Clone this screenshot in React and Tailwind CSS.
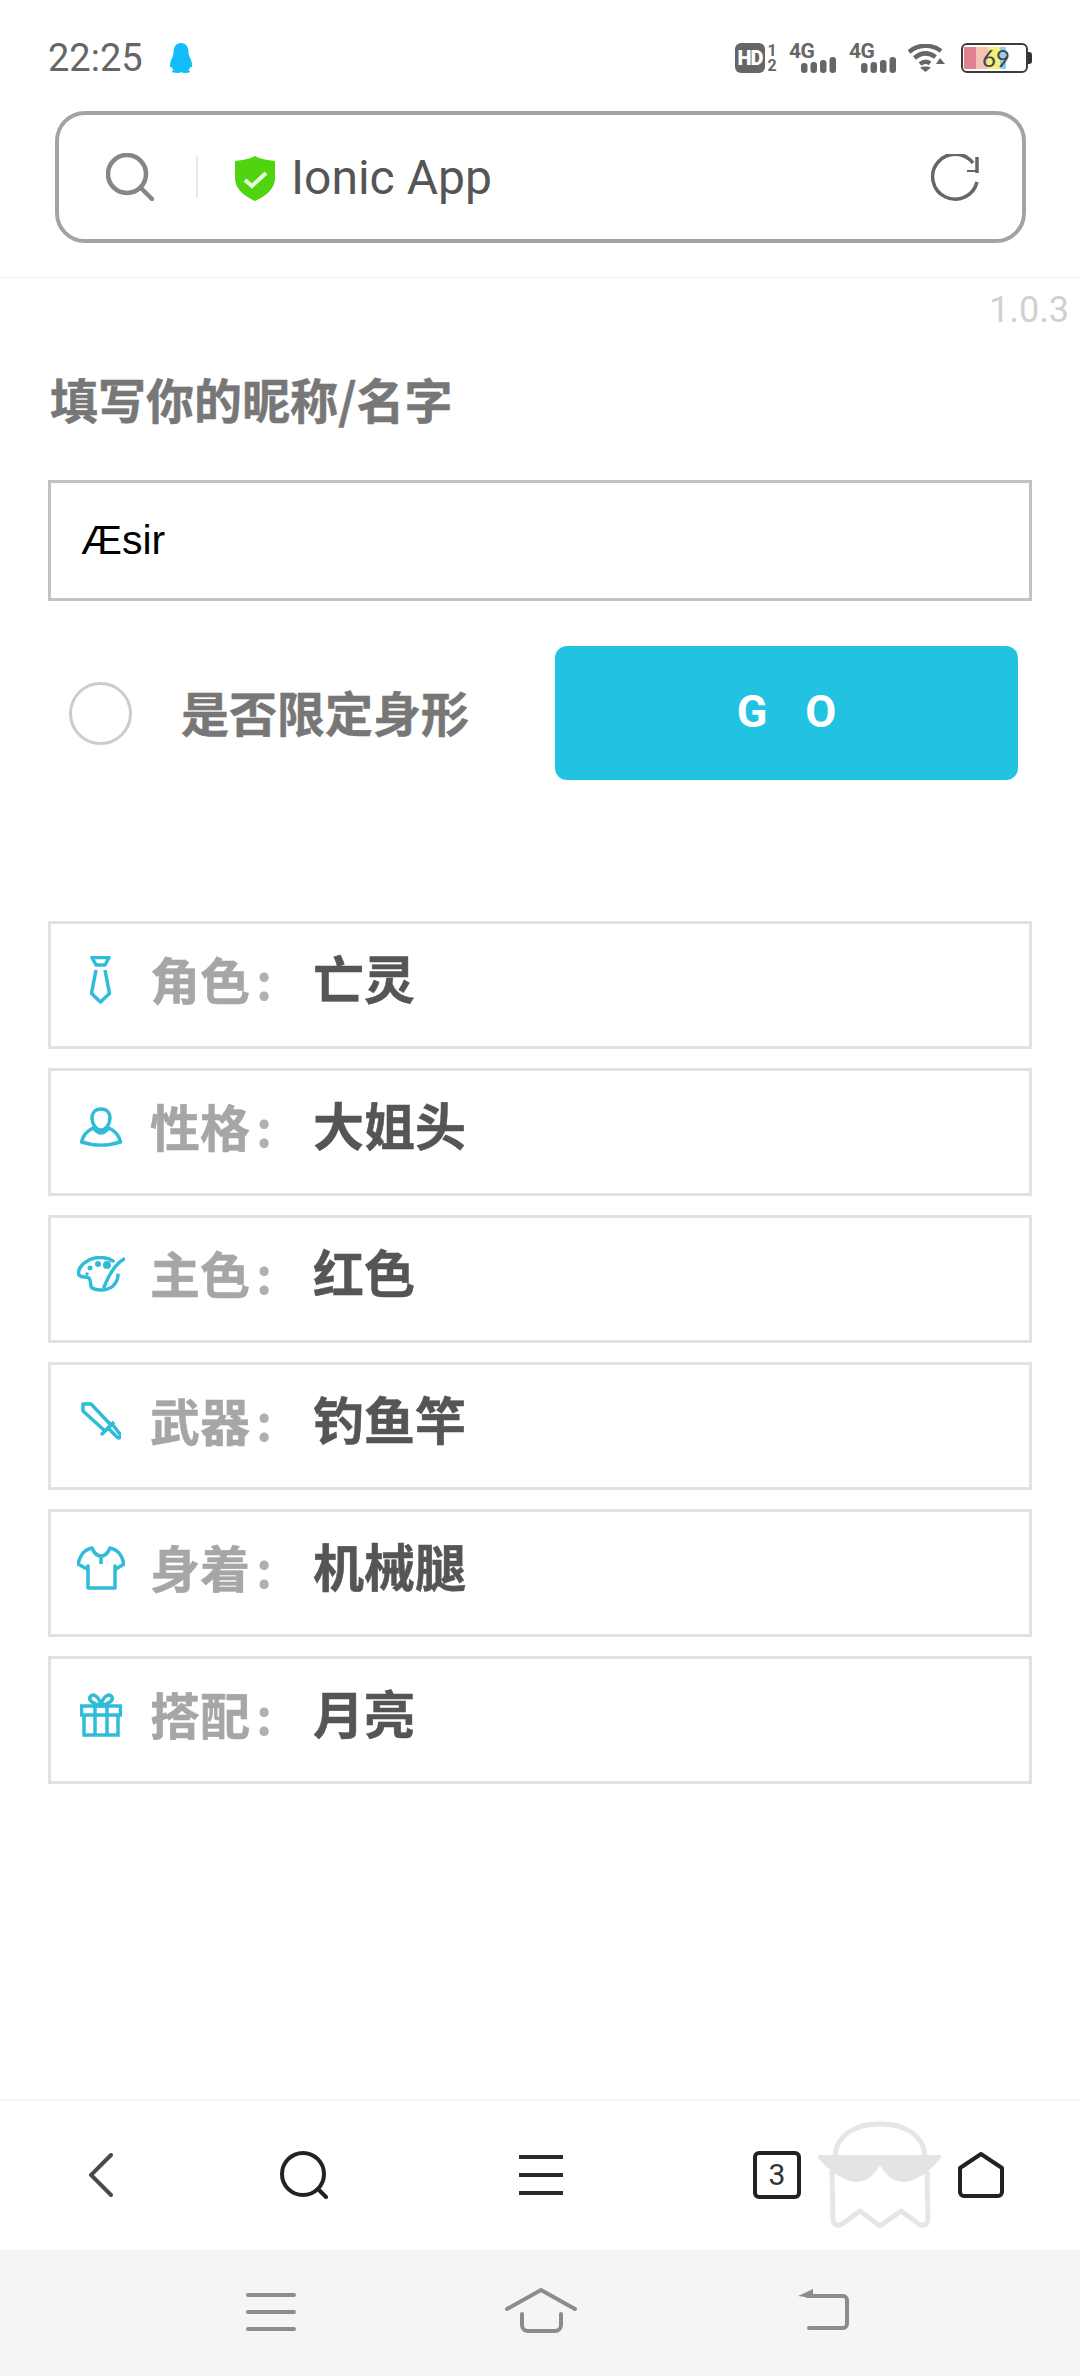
import React from "react";

const C = "#2fbcd8";

function Penguin() {
  return (
    <svg width="24" height="30" viewBox="0 0 24 30" className="ml-[26px]">
      <path fill="#12bdf8" d="M12 0c5 0 7.500 4 7.500 9 0 2 .3 3 1.200 5 1.500 3 2.500 6 2.500 9 0 1.500-1 1.800-2.200.7 0 1.500-.6 2.800-1.600 3.500 1.300.6 2 1.200 1.600 1.900-.4.7-3 .9-5 .9-1.600 0-3-.4-4-.8-1 .4-2.400.8-4 .8-2 0-4.600-.2-5-.9-.4-.7.3-1.300 1.600-1.900-1-.7-1.600-2-1.600-3.500C2 25 1 24.500 1 23c0-3 1-6 2.500-9 .9-2 1-3 1-5C4.500 4 7 0 12 0z" />
    </svg>
  );
}

function HD() {
  return (
    <div className="flex items-center">
      <div className="w-[30px] h-[30px] rounded-[6px] bg-[#666] text-white text-[20px] font-black leading-none flex items-center justify-center font-['Roboto',sans-serif] tracking-[-1px]">HD</div>
      <div className="ml-[1px] w-[12px] flex flex-col items-center text-[#666] text-[16px] font-bold leading-[15px] font-['Roboto',sans-serif]">
        <span>1</span>
        <span>2</span>
      </div>
    </div>
  );
}

function Signal({ className }) {
  return (
    <div className={"relative w-[47px] h-[30px] " + className}>
      <span className="absolute left-0 top-0 text-[21px] leading-[17px] font-bold text-[#666] tracking-[-0.5px] font-['Roboto',sans-serif]">4G</span>
      <svg width="47" height="30" viewBox="0 0 47 30" className="absolute left-0 top-0">
        <g fill="#666">
          <rect x="12" y="20" width="6.500" height="10" rx="3" />
          <rect x="21.500" y="19" width="6.500" height="11" rx="3" />
          <rect x="31" y="17" width="6.500" height="13" rx="3" />
          <rect x="40.500" y="14" width="6.500" height="16" rx="3" />
        </g>
      </svg>
    </div>
  );
}

function Wifi() {
  return (
    <svg width="37" height="28" viewBox="0 0 37 28" className="ml-[12px]" fill="none" stroke="#666" strokeWidth="4.500">
      <path d="M1 8C10 0 24 0 33 7" />
      <path d="M6.500 14c7-6 14-6 21-1" />
      <path d="M12 20c4-3 7-3 10-.5" />
      <path d="M17.500 28l-5.500-4.500c3-1.500 8-1.500 11 0z" fill="#666" stroke="none" />
      <path d="M32 14l5 6h-9z" fill="#666" stroke="none" />
    </svg>
  );
}

function Battery() {
  return (
    <div className="ml-[16px] flex items-center">
      <div className="relative w-[67px] h-[30px] rounded-[6px] border-[2.5px] border-[#3c3c3c] flex items-center overflow-hidden pl-[1px]">
        <div className="h-[22px] w-[12px] bg-[#e28291]" />
        <div className="h-[22px] w-[12px] bg-[#f3c3b8]" />
        <div className="h-[22px] w-[12px] bg-[#f3ee7e]" />
        <div className="h-[22px] w-[6px] bg-[#8fd0ee]" />
        <span className="absolute left-[19px] top-[2px] text-[24px] leading-[21px] text-[#444] font-['Lato',sans-serif]">69</span>
      </div>
      <div className="w-[4px] h-[12px] rounded-r-[3px] bg-[#333]" />
    </div>
  );
}

function SearchIcon() {
  return (
    <svg width="48" height="48" viewBox="0 0 48 48" fill="none" stroke="#868686" strokeWidth="4.500" strokeLinecap="round">
      <circle cx="21" cy="21" r="19" />
      <path d="M35 35l11 11" />
    </svg>
  );
}

function Shield() {
  return (
    <svg width="40" height="45" viewBox="0 0 40 45" className="ml-[37px] mt-[2px]">
      <path fill="#4fd40f" d="M20 0c5 3 12 4 20 5v17c0 11-9 18-20 23C9 40 0 33 0 22V5c8-1 15-2 20-5z" />
      <path fill="none" stroke="#eafbe0" strokeWidth="4" d="M10 24l7 6 14-13" />
    </svg>
  );
}

function Refresh() {
  return (
    <svg width="48" height="48" viewBox="0 0 48 48" fill="none" stroke="#666" strokeWidth="3.500" className="mt-[2px]">
      <path d="M46 28A22.500 22.500 0 1 1 42 9" />
      <path d="M46 3v16" strokeWidth="3.500" />
      <path d="M36 17h10" strokeWidth="2" />
    </svg>
  );
}

const IconTie = () => (
  <svg width="21" height="48" viewBox="0 0 21 48" fill="none" stroke={C} strokeWidth="3.500" strokeLinejoin="round">
    <path d="M2 1.500h17L15 9H6z" />
    <path d="M6 14L1.500 37.500 10.500 46 19.500 37.500 15 14" />
  </svg>
);
const IconPerson = () => (
  <svg width="42" height="40" viewBox="0 0 42 40" fill="none" stroke={C} strokeWidth="3.500" strokeLinejoin="round">
    <path d="M21 2c6 0 9 4 9 9 0 6-4 12-9 12s-9-6-9-12c0-5 3-9 9-9z" />
    <path d="M13 21C7 24 3 28 1.500 35c12 4 27 4 39 0-1.500-7-5.500-11-11.500-14-2 2-5 5-8 5s-6-3-8-5z" />
  </svg>
);
const IconPalette = () => (
  <svg width="48" height="36" viewBox="0 0 48 36" fill="none" stroke={C} strokeWidth="3.500" strokeLinecap="round">
    <path d="M36 5C30 1 20 0 12 4 4 8 0 15 2 19c2 3 7 1 10 3 3 3 0 7 3 10 5 3 15 3 21-2 3-3 5-7 5-11" />
    <path d="M47 3C40 7 33 16 27 31" />
    <g fill={C} stroke="none">
      <circle cx="30" cy="9" r="4" />
      <circle cx="21" cy="8" r="3" />
      <circle cx="13" cy="12" r="2.500" />
      <circle cx="10" cy="18" r="1.800" />
    </g>
  </svg>
);
const IconSword = () => (
  <svg width="40" height="40" viewBox="0 0 40 40" fill="none" stroke={C} strokeWidth="3.500" strokeLinejoin="round">
    <path d="M2 3h8l20 21-6 6L2 10z" />
    <path d="M33 21L20 34" />
    <path d="M27 27l9 9c3 3 5-2 2-4l-6-8" />
  </svg>
);
const IconTee = () => (
  <svg width="48" height="44" viewBox="0 0 48 44" fill="none" stroke={C} strokeWidth="3.500" strokeLinejoin="round">
    <path d="M15 2C6 4 3 10 1 18l9 5 1-3v22h27V20l1 3 8-5c-2-8-5-14-14-16-2 5-5 8-9 8s-7-3-9-8z" />
    <path d="M24 11v7" />
  </svg>
);
const IconGift = () => (
  <svg width="42" height="44" viewBox="0 0 42 44" fill="none" stroke={C} strokeWidth="3.500">
    <rect x="1.500" y="13" width="39" height="9" />
    <path d="M4 22v20h34V22" />
    <path d="M15 13v29M27 13v29" />
    <path d="M21 13C15 11 8 8 10 4c2-4 9-2 11 9 2-11 9-13 11-9 2 4-5 7-11 9z" />
  </svg>
);

const rows = [
  ["角色", "亡灵", IconTie],
  ["性格", "大姐头", IconPerson],
  ["主色", "红色", IconPalette],
  ["武器", "钓鱼竿", IconSword],
  ["身着", "机械腿", IconTee],
  ["搭配", "月亮", IconGift],
];

export default function App() {
  return (
    <div className="w-[1080px] h-[2376px] bg-white flex flex-col overflow-hidden relative font-['Noto_Sans_CJK_SC',sans-serif]">
      {/* status bar */}
      <div className="h-[111px] pl-[48px] pr-[48px] pt-[5px] flex items-center shrink-0">
        <span className="text-[38px] leading-none text-[#666] font-['Roboto',sans-serif]">22:25</span>
        <Penguin />
        <div className="ml-auto flex items-center">
          <HD />
          <Signal className="ml-[11px]" />
          <Signal className="ml-[13px]" />
          <Wifi />
          <Battery />
        </div>
      </div>

      {/* address bar */}
      <div className="h-[167px] shrink-0 border-b border-[#f0f0f0] pl-[55px] pr-[54px]">
        <div className="h-[132px] border-4 border-[#a3a3a3] rounded-[30px] flex items-center pl-[47px] pr-[43px]">
          <SearchIcon />
          <div className="ml-[42px] w-[2px] h-[42px] bg-[#e8e8e8]" />
          <Shield />
          <span className="ml-[16px] mt-[2px] text-[48px] leading-none text-[#555] font-['Roboto',sans-serif]">Ionic App</span>
          <div className="ml-auto">
            <Refresh />
          </div>
        </div>
      </div>

      {/* main */}
      <div className="flex-1 flex flex-col">
        <div className="pt-[14px] pr-[11px] text-right text-[36px] leading-[36px] text-[#d0d0d0] font-['Roboto',sans-serif]">1.0.3</div>
        <div className="mt-[40px] pl-[50px] text-[48px] leading-[60px] font-bold text-[#777] [-webkit-text-stroke:0.5px_#777]">填写你的昵称/名字</div>
        <div className="mx-[48px] mt-[52px]">
          <input
            readOnly
            value="Æsir"
            className="w-full h-[121px] border-[3px] border-[#c2c2c2] pl-[30px] text-[41px] text-black outline-none font-['Liberation_Sans',sans-serif]"
          />
        </div>
        <div className="mt-[45px] pl-[69px] pr-[62px] flex items-center">
          <div className="w-[63px] h-[63px] rounded-full border-[3px] border-[#cccccc]" />
          <span className="ml-[49px] mb-[5px] text-[48px] leading-none font-bold text-[#777] [-webkit-text-stroke:0.5px_#777]">是否限定身形</span>
          <button className="ml-auto w-[463px] h-[134px] rounded-[12px] bg-[#22c3e0] text-white text-[45px] font-bold leading-none pl-[38px] pb-[3px] tracking-[38px] font-['Roboto',sans-serif]">GO</button>
        </div>
        <div className="mx-[48px] mt-[141px] flex flex-col gap-[19px]">
          {rows.map(([label, value, Icon]) => (
            <div key={label} className="h-[128px] border-[3px] border-[#e2e2e2] flex items-center pb-[10px]">
              <div className="w-[99px] flex justify-center">
                <Icon />
              </div>
              <span className="mb-[5px] text-[50px] leading-none font-bold text-[#a6a6a6] [-webkit-text-stroke:0.5px_#a6a6a6]">{label}</span>
              <span className="mb-[5px] w-[63px] pl-[6px] text-[50px] leading-none font-bold text-[#b0b0b0]">:</span>
              <span className="mb-[5px] text-[51px] leading-none font-bold text-[#555] [-webkit-text-stroke:0.5px_#555]">{value}</span>
            </div>
          ))}
        </div>
      </div>

      {/* browser bar */}
      <div className="h-[151px] shrink-0 border-t-2 border-[#f6f6f6] flex items-center pb-[2px]">
        <svg width="24" height="44" viewBox="0 0 24 44" fill="none" stroke="#4a4a4a" strokeWidth="4" strokeLinecap="round" className="ml-[89px]">
          <path d="M22 2L2 22l20 20" />
        </svg>
        <svg width="48" height="48" viewBox="0 0 48 48" fill="none" stroke="#222" strokeWidth="4" strokeLinecap="round" className="ml-[167px]">
          <circle cx="23" cy="23" r="21" />
          <path d="M38 38l8 8" />
        </svg>
        <svg width="44" height="40" viewBox="0 0 44 40" stroke="#2a2a2a" strokeWidth="4" className="ml-[191px]">
          <path d="M0 2h44M0 20h44M0 38h44" />
        </svg>
        <div className="ml-[190px] w-[48px] h-[48px] rounded-[6px] border-[4.5px] border-[#222] flex items-center justify-center text-[30px] leading-none text-[#333] font-['Roboto',sans-serif]">3</div>
        <svg width="46" height="48" viewBox="0 0 46 48" fill="none" stroke="#222" strokeWidth="4" strokeLinejoin="round" className="ml-[157px]">
          <path d="M2 17L23 3l21 14v24a4 4 0 0 1-4 4H6a4 4 0 0 1-4-4z" />
        </svg>
      </div>

      {/* system nav */}
      <div className="h-[126px] shrink-0 bg-[#f5f5f5] flex items-start pt-[38px]">
        <svg width="50" height="38" viewBox="0 0 50 38" stroke="#8c8c8c" strokeWidth="4" strokeLinecap="round" className="ml-[246px] mt-[5px]">
          <path d="M2 2h46M2 19h46M2 36h46" />
        </svg>
        <svg width="72" height="46" viewBox="0 0 72 46" fill="none" stroke="#8c8c8c" strokeWidth="4" strokeLinecap="round" className="ml-[209px]">
          <path d="M2 21L36 2l34 19" />
          <path d="M17 26v11a6 6 0 0 0 6 6h27a6 6 0 0 0 6-6V26" />
        </svg>
        <svg width="52" height="44" viewBox="0 0 52 44" fill="none" stroke="#8c8c8c" strokeWidth="4" strokeLinecap="round" className="ml-[221px]">
          <path d="M0 8L15 1v9z" fill="#8c8c8c" stroke="none" />
          <path d="M9 8h36a4 4 0 0 1 4 4v24a4 4 0 0 1-4 4H11" />
        </svg>
      </div>

      {/* floating ghost */}
      <svg width="125" height="108" viewBox="0 0 125 108" fill="none" className="absolute left-[817px] top-[2121px]">
        <path d="M18 34C20 14 38 3 63 3s43 11 45 31" stroke="#e6e6e6" strokeWidth="5" />
        <path d="M15 50l1 48c0 5 4 8 9 5l18-13 20 15 21-15 18 13c5 3 9 0 9-5l-1-48" stroke="#e6e6e6" strokeWidth="5" strokeLinejoin="round" />
        <path d="M3 34h119c2 0 3 2 1 4-8 9-19 20-34 23-11 1-20-6-26-17-6 11-15 18-26 17C22 58 10 47 2 38c-2-2-1-4 1-4z" fill="#e4e4e4" />
      </svg>
    </div>
  );
}
